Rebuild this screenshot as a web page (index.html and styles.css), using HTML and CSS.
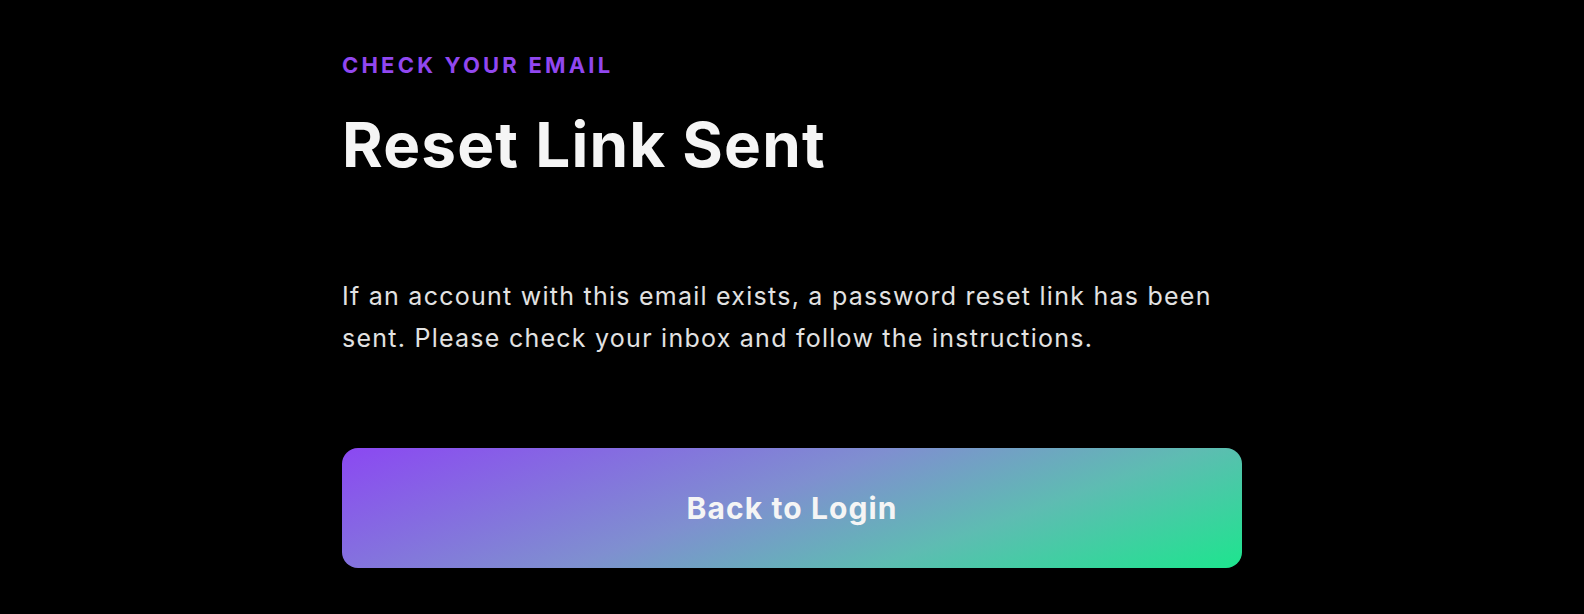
FILE: index.html
```html
<!DOCTYPE html>
<html lang="en">
<head>
    <meta charset="UTF-8">
    <meta name="viewport" content="width=device-width, initial-scale=1.0">
    <title>Reset Link Sent</title>
    <link rel="stylesheet" href="styles.css">
</head>
<body>

    <div class="container">
        <div class="eyebrow">Check your email</div>
        <h1 class="title">Reset Link Sent</h1>
        <p class="message">
            If an account with this email exists, a password reset link has been
            sent. Please check your inbox and follow the instructions.
        </p>
        <button class="back-button" type="button">Back to Login</button>
    </div>

</body>
</html>
```

FILE: styles.css
```css
body {
    margin: 0;
    font-family: Inter, "Noto Sans", sans-serif;
    background-color: #000;
    color: #f5f5f5;
}
.container {
    width: 900px;
    margin: 0 auto;
    padding-top: 52px;
}
.eyebrow {
    font-size: 22px;
    line-height: 1.2;
    font-weight: 700;
    letter-spacing: 3.2px;
    text-transform: uppercase;
    color: #9147f0;
}
.title {
    margin: 30px 0 0;
    font-size: 62px;
    line-height: 1.2;
    font-weight: 700;
    letter-spacing: 1.2px;
    color: #f5f5f5;
}
.message {
    margin: 92px 0 0;
    font-size: 25px;
    line-height: 42px;
    letter-spacing: 1.25px;
    color: #e2e2e2;
}
.back-button {
    display: block;
    width: 100%;
    height: 120px;
    margin-top: 89px;
    border: none;
    border-radius: 16px;
    background: linear-gradient(160deg, #8b48f2 0%, #7f8fd0 45%, #5ebcb2 70%, #1de58e 100%);
    color: #f5f5f5;
    font-family: inherit;
    font-size: 30px;
    font-weight: 700;
    letter-spacing: 1.1px;
    cursor: pointer;
}
```
